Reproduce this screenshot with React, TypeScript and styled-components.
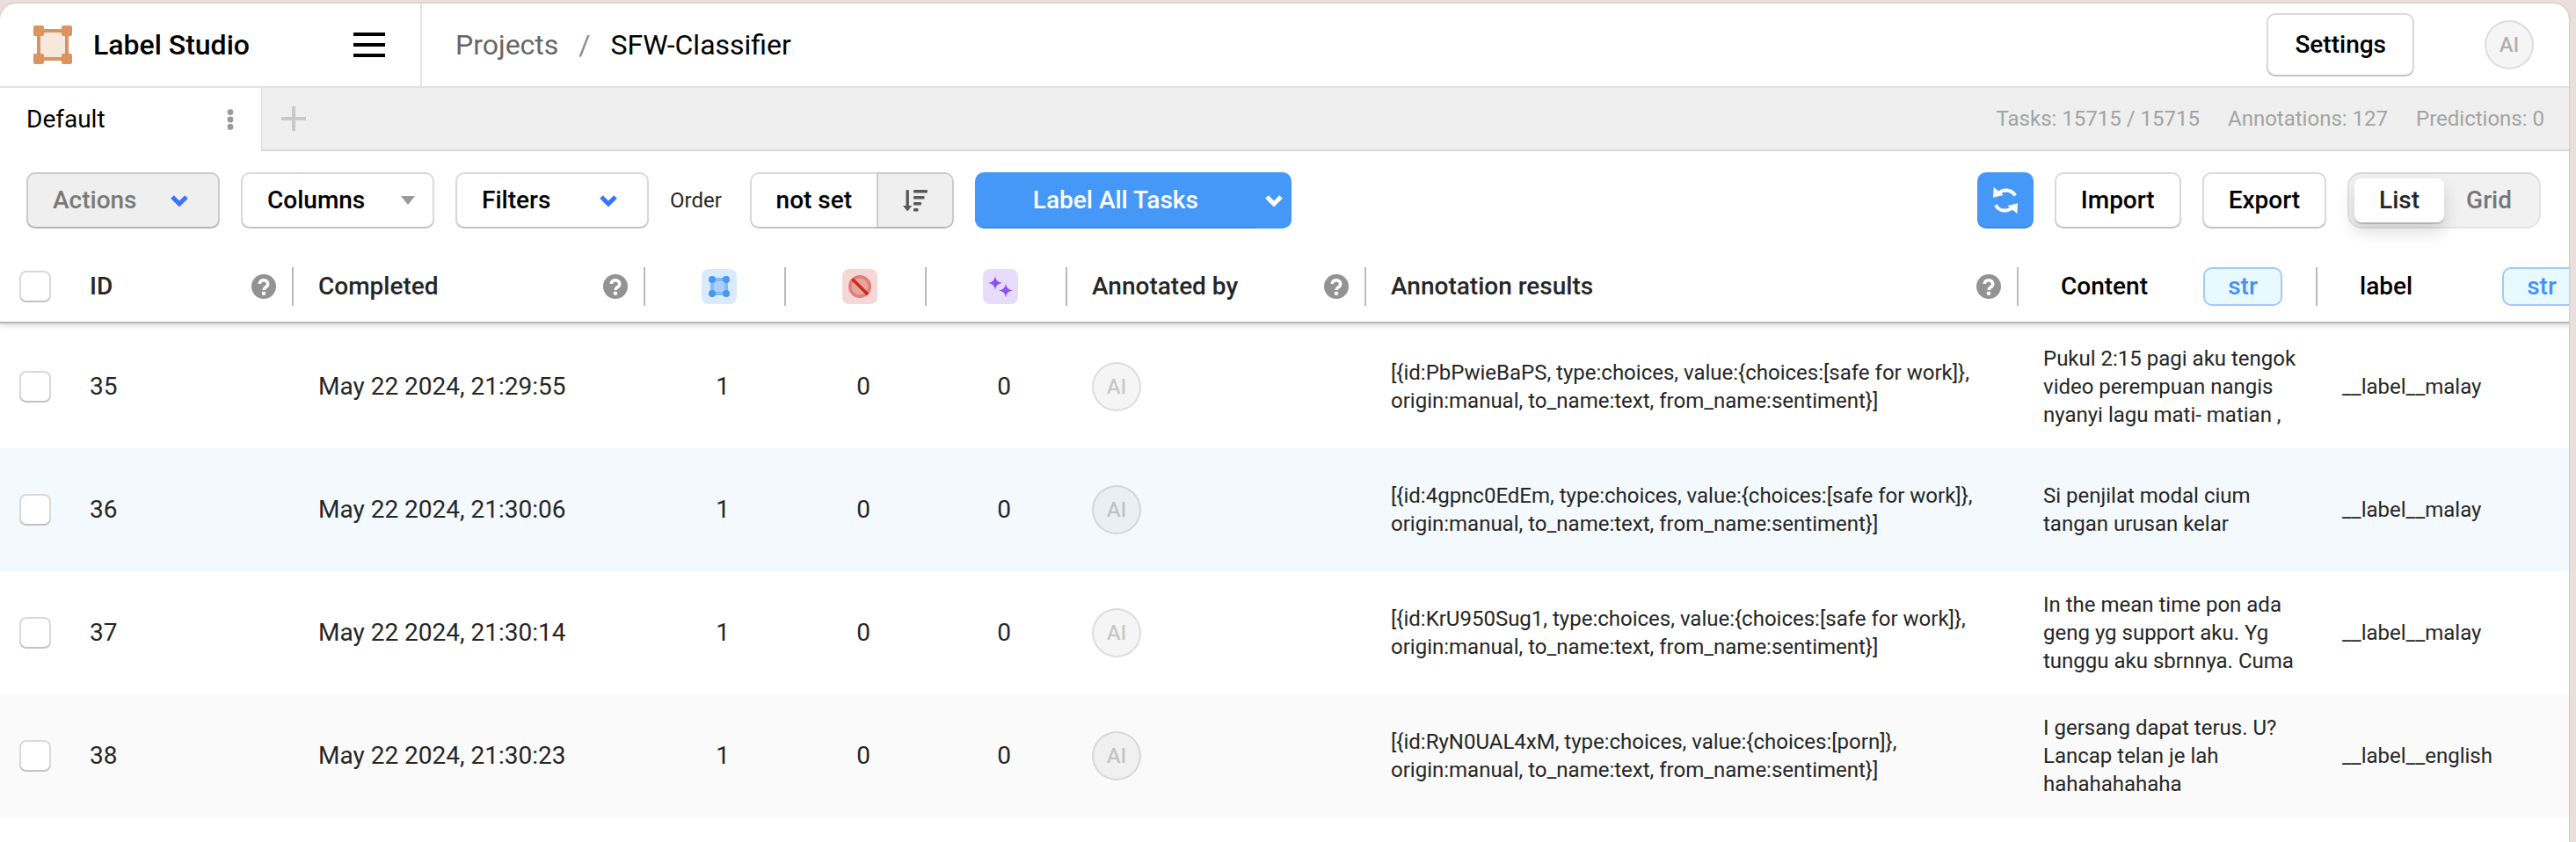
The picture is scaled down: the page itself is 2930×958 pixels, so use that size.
import React from 'react';
import styled, { createGlobalStyle, css } from 'styled-components';

const GlobalStyle = createGlobalStyle`
  *, *::before, *::after { box-sizing: border-box; }
  body {
    margin: 0;
    background: #ebdfde;
    color: #262626;
    font-family: Roboto, "Liberation Sans", sans-serif;
    font-size: 28px;
    line-height: 32px;
  }
  button { font: inherit; color: inherit; border: 0; margin: 0; padding: 0; background: none; cursor: pointer; }
  a { color: inherit; text-decoration: none; }
  svg { display: block; flex: none; }
`;

const Window = styled.div`
  margin: 4px 8px 0 0;
  min-height: calc(100vh - 4px);
  background: #fff;
  border-radius: 18px 18px 0 0;
  overflow: hidden;
  box-shadow: 0 0 2px rgba(0, 0, 0, 0.3);
`;

const Header = styled.header`
  display: flex;
  align-items: center;
  height: 96px;
  border-bottom: 2px solid #e2e2e2;
`;

const Brand = styled.div`
  display: flex;
  align-items: center;
  align-self: stretch;
  width: 480px;
  padding: 0 40px 0 38px;
  border-right: 2px solid #e2e2e2;
`;

const BrandName = styled.a`
  display: flex;
  align-items: center;
  gap: 24px;
  margin-right: auto;
  color: #000;
  font-size: 32px;
  font-weight: 500;
`;

const Breadcrumbs = styled.nav`
  display: flex;
  gap: 23px;
  margin-right: auto;
  padding-left: 38px;
  color: #000;
  font-size: 32px;
  line-height: 40px;
`;

const Crumb = styled.a<{ $muted?: boolean }>`
  color: ${(p) => (p.$muted ? '#666' : '#000')};
`;

const Slash = styled.span`
  color: #8c8c8c;
`;

const Avatar = styled.span<{ $faded?: boolean }>`
  display: flex;
  align-items: center;
  justify-content: center;
  width: 56px;
  height: 56px;
  border-radius: 50%;
  background: rgba(0, 0, 0, 0.04);
  box-shadow: inset 0 0 0 2px rgba(0, 0, 0, 0.1);
  color: ${(p) => (p.$faded ? 'rgba(0, 0, 0, 0.2)' : 'rgba(0, 0, 0, 0.3)')};
  font-size: 24px;
  font-weight: 500;
`;

const HeaderActions = styled.div`
  display: flex;
  align-items: center;
  gap: 80px;
  padding-right: 40px;
`;

const edge = css`
  box-shadow: inset 0 0 0 2px rgba(0, 0, 0, 0.15), inset 0 -2px 0 rgba(0, 0, 0, 0.1);
`;

const Button = styled.button<{ $tall?: boolean; $menu?: boolean }>`
  display: flex;
  align-items: center;
  justify-content: space-between;
  width: ${(p) => (p.$menu ? '220px' : 'auto')};
  height: ${(p) => (p.$tall ? '72px' : '64px')};
  padding: 0 ${(p) => (p.$tall ? '32px' : '30px')};
  border-radius: 10px;
  background: #fff;
  color: #000;
  font-weight: 500;
  ${edge}
  &:disabled { background: #efefef; color: #7a7a7a; cursor: default; }
`;

const IconSlot = styled.span<{ $wide?: boolean }>`
  margin-right: ${(p) => (p.$wide ? '6px' : '-8px')};
`;

const TabBar = styled.div`
  display: flex;
  height: 72px;
  background: #efefef;
`;

const Tab = styled.div`
  display: flex;
  align-items: center;
  justify-content: space-between;
  width: 298px;
  padding: 0 31px 0 30px;
  border-right: 1px solid #d8d8d8;
  background: #fff;
  color: #000;
`;

const TabRest = styled.div`
  display: flex;
  flex: 1;
  align-items: center;
  justify-content: space-between;
  padding: 0 28px 0 22px;
  border-bottom: 2px solid #d8d8d8;
`;

const Stats = styled.div`
  display: flex;
  gap: 32px;
  color: #a3a3a3;
  font-size: 24px;
`;

const Toolbar = styled.div`
  display: flex;
  align-items: center;
  gap: 24px;
  height: 112px;
  padding: 0 32px 0 30px;
`;

const ToolbarGroup = styled.div<{ $end?: boolean }>`
  display: flex;
  align-items: center;
  gap: 24px;
  margin-left: ${(p) => (p.$end ? 'auto' : '0')};
`;

const OrderGroup = styled.div`
  display: flex;
  align-items: center;
  gap: 32px;
  font-size: 24px;
`;

const Joined = styled.div`
  display: flex;
  border-radius: 10px;
  overflow: hidden;
  font-size: 28px;
`;

const OrderField = styled.button`
  width: 146px;
  height: 64px;
  border-radius: 10px 0 0 10px;
  background: #fff;
  color: #000;
  font-weight: 500;
  ${edge}
`;

const OrderDirection = styled.button`
  display: flex;
  align-items: center;
  justify-content: center;
  width: 88px;
  height: 64px;
  margin-left: -2px;
  border-radius: 0 10px 10px 0;
  background: #efefef;
  ${edge}
`;

const primary = css`
  background: #4598f7;
  color: #fff;
  font-weight: 500;
`;

const LabelButton = styled.button`
  ${primary}
  width: 320px;
  height: 64px;
  box-shadow: inset 0 -2px 0 rgba(0, 0, 0, 0.1);
`;

const LabelMenuButton = styled.button`
  ${primary}
  display: flex;
  align-items: center;
  width: 40px;
  height: 64px;
  padding-left: 10px;
`;

const RefreshButton = styled.button`
  ${primary}
  display: flex;
  align-items: center;
  justify-content: center;
  width: 64px;
  height: 64px;
  border-radius: 10px;
  box-shadow: inset 0 -2px 0 rgba(0, 0, 0, 0.1);
`;

const ViewSwitch = styled.div`
  display: flex;
  align-items: center;
  height: 64px;
  padding: 0 8px;
  border-radius: 16px;
  background: #f1f1f1;
  box-shadow: inset 0 0 0 2px rgba(0, 0, 0, 0.05), inset 0 2px 0 rgba(0, 0, 0, 0.06);
`;

const ViewOption = styled.button<{ $active?: boolean }>`
  height: 50px;
  padding: 0 ${(p) => (p.$active ? '28px' : '25px')};
  border-radius: 8px;
  color: #777;
  font-weight: 500;
  ${(p) => p.$active && css`
    background: #fff;
    color: #262626;
    box-shadow: 0 2px 0 rgba(0, 0, 0, 0.16), 0 10px 20px rgba(0, 0, 0, 0.15);
  `}
`;

const TableArea = styled.main`
  overflow: hidden;
`;

const Table = styled.table`
  width: 2976px;
  table-layout: fixed;
  border-collapse: separate;
  border-spacing: 0;
`;

const Head = styled.thead`
  position: relative;
  box-shadow: 0 2px 6px rgba(0, 0, 0, 0.16);
`;

const HeadCell = styled.th`
  height: 84px;
  padding: 2px 0 0;
  border-bottom: 2px solid #b6b6bf;
  font-weight: 500;
  text-align: left;
`;

const HeadInner = styled.div<{ $center?: boolean; $field?: boolean; $plain?: boolean }>`
  display: flex;
  align-items: center;
  justify-content: ${(p) => (p.$center ? 'center' : 'space-between')};
  height: 44px;
  padding: ${(p) => (p.$field ? '0 38px 0 48px' : '0 18px 0 28px')};
  border-right: 2px solid ${(p) => (p.$plain ? 'transparent' : '#bababa')};
  color: ${(p) => (p.$field ? '#000' : '#262626')};
`;

const TypeTag = styled.button`
  width: 90px;
  height: 44px;
  border: 2px solid #a3c8fa;
  border-radius: 10px;
  background: #e8faff;
  color: #4590f7;
  font-weight: 500;
`;

const KindBadge = styled.span<{ $tint: string }>`
  display: flex;
  align-items: center;
  justify-content: center;
  width: 40px;
  height: 40px;
  border-radius: 8px;
  background: ${(p) => p.$tint};
`;

const Body = styled.tbody`
  &::before {
    content: '';
    display: table-row;
    height: 2px;
  }
`;

const Row = styled.tr<{ $tone: string }>`
  height: 140px;
  background: ${(p) => p.$tone};
`;

const Cell = styled.td<{ $center?: boolean; $small?: boolean }>`
  padding: 0 12px 0 28px;
  text-align: ${(p) => (p.$center ? 'center' : 'left')};
  font-size: ${(p) => (p.$small ? '24px' : '28px')};
  vertical-align: middle;
`;

const CheckCell = styled.td`
  padding: 0 0 0 22px;
  vertical-align: middle;
`;

const Check = styled.input`
  display: block;
  appearance: none;
  width: 36px;
  height: 36px;
  margin: 0;
  border-radius: 8px;
  background: #fff;
  ${edge}
`;

const CheckHead = styled(HeadCell)`
  padding-left: 22px;
`;

const Chevron = ({ color = '#3874ff' }: { color?: string }) => (
  <svg width="20" height="13" viewBox="0 0 20 13" aria-hidden="true">
    <path d="M2 2l8 8 8-8" fill="none" stroke={color} strokeWidth="5" />
  </svg>
);

const Caret = () => (
  <svg width="16" height="10" viewBox="0 0 16 10" aria-hidden="true">
    <path d="M0 0h16l-8 10z" fill="#999" />
  </svg>
);

const Logo = () => (
  <svg width="44" height="44" viewBox="0 0 44 44" aria-hidden="true">
    <rect x="6" y="6" width="32" height="32" fill="#f7e8dd" stroke="#dc935d" strokeWidth="4" />
    {[0, 32].map((x) => [0, 32].map((y) => (
      <rect key={`${x}-${y}`} x={x} y={y} width="12" height="12" rx="2" fill="#dc935d" />
    )))}
  </svg>
);

const MenuIcon = () => (
  <svg width="36" height="28" viewBox="0 0 36 28" aria-hidden="true">
    <path d="M0 0h36v4H0zM0 12h36v4H0zM0 24h36v4H0z" fill="#000" />
  </svg>
);

const DotsIcon = () => (
  <svg width="8" height="24" viewBox="0 0 8 24" fill="#999" aria-hidden="true">
    <circle cx="4" cy="3.6" r="3.4" />
    <circle cx="4" cy="12" r="3.4" />
    <circle cx="4" cy="20.4" r="3.4" />
  </svg>
);

const PlusIcon = () => (
  <svg width="28" height="28" viewBox="0 0 28 28" aria-hidden="true">
    <path d="M12 0h4v12h12v4H16v12h-4V16H0v-4h12z" fill="#c9c9c9" />
  </svg>
);

const SortIcon = () => (
  <svg width="28" height="25" viewBox="0 0 28 25" fill="#595959" aria-hidden="true">
    <path d="M3.500 1q0-1 1.700-1t1.700 1v17h3.400l-5.100 6.500L0 18h3.500z" />
    <rect x="12" y="0" width="16" height="3.600" rx="1" />
    <rect x="12" y="7" width="12.500" height="3.600" rx="1" />
    <rect x="12" y="14" width="9" height="3.600" rx="1" />
    <rect x="12" y="21" width="5.500" height="3.600" rx="1" />
  </svg>
);

const RefreshIcon = () => (
  <svg width="28" height="30" viewBox="0 0 28 30" aria-hidden="true">
    <path d="M6 7.500c5-6 15-5.500 19 2.200M22 22.500c-5 6-15 5.500-19-2.200" fill="none" stroke="#fff" strokeWidth="4" />
    <path d="M0.700 0L0 11.700L11.700 9zM27.300 30L28 18.300L16.300 21z" fill="#fff" />
  </svg>
);

const HelpIcon = () => (
  <svg width="28" height="28" viewBox="0 0 28 28" aria-hidden="true">
    <circle cx="14" cy="14" r="14" fill="#939393" />
    <path d="M9.300 11a4.700 4.200 0 1 1 7.500 3.400c-1.800 1.200-2.800 1.600-2.800 3.600" fill="none" stroke="#fff" strokeWidth="3.600" />
    <circle cx="14" cy="21.800" r="2.300" fill="#fff" />
  </svg>
);

const RegionIcon = () => (
  <svg width="24" height="26" viewBox="0 0 24 26" aria-hidden="true">
    <rect x="4" y="5" width="16" height="16" fill="#abcffb" stroke="#87bafa" strokeWidth="4" />
    {[4, 20].map((x) => [5, 21].map((y) => (
      <circle key={`${x}-${y}`} cx={x} cy={y} r="4" fill="#4598f7" />
    )))}
  </svg>
);

const CancelIcon = () => (
  <svg width="26" height="26" viewBox="0 0 26 26" aria-hidden="true">
    <circle cx="13" cy="13" r="11.200" fill="#e9a49e" stroke="#df7f77" strokeWidth="3.600" />
    <path d="M4.500 4.500l17.500 17.500" stroke="#cc2a1c" strokeWidth="3.600" />
  </svg>
);

const SparkIcon = () => (
  <svg width="28" height="25" viewBox="0 0 28 25" fill="#8b51f7" aria-hidden="true">
    <path d="M8 0c1 5 2.500 7 8 8-5.500 1-7 3-8 8-1-5-2.500-7-8-8 5.500-1 7-3 8-8z" />
    <path d="M20 8.500c1 5 2.500 7 8 8-5.500 1-7 3-8 8-1-5-2.500-7-8-8 5.500-1 7-3 8-8z" />
  </svg>
);

const columnWidths = [74, 260, 400, 160, 160, 160, 340, 742, 340, 340];

const tail = 'origin:manual, to_name:text, from_name:sentiment}]';

const tasks = [
  { id: 35, done: 'May 22 2024, 21:29:55', tone: 'transparent', result: '[{id:PbPwieBaPS, type:choices, value:{choices:[safe for work]},', content: 'Pukul 2:15 pagi aku tengok video perempuan nangis nyanyi lagu mati- matian ,', label: '__label__malay' },
  { id: 36, done: 'May 22 2024, 21:30:06', tone: '#f4f9fe', result: '[{id:4gpnc0EdEm, type:choices, value:{choices:[safe for work]},', content: 'Si penjilat modal cium tangan urusan kelar', label: '__label__malay' },
  { id: 37, done: 'May 22 2024, 21:30:14', tone: 'transparent', result: '[{id:KrU950Sug1, type:choices, value:{choices:[safe for work]},', content: 'In the mean time pon ada geng yg support aku. Yg tunggu aku sbrnnya. Cuma', label: '__label__malay' },
  { id: 38, done: 'May 22 2024, 21:30:23', tone: '#fafafa', result: '[{id:RyN0UAL4xM, type:choices, value:{choices:[porn]},', content: 'I gersang dapat terus. U? Lancap telan je lah hahahahahaha', label: '__label__english' },
];

const TextHead = ({ title }: { title: string }) => (
  <HeadCell scope="col">
    <HeadInner>{title}<HelpIcon /></HeadInner>
  </HeadCell>
);

const KindHead = ({ label, tint, children }: { label: string; tint: string; children: React.ReactNode }) => (
  <HeadCell scope="col" aria-label={label}>
    <HeadInner $center><KindBadge $tint={tint}>{children}</KindBadge></HeadInner>
  </HeadCell>
);

const FieldHead = ({ title, last }: { title: string; last?: boolean }) => (
  <HeadCell scope="col">
    <HeadInner $field $plain={last}>{title}<TypeTag type="button">str</TypeTag></HeadInner>
  </HeadCell>
);

export default function App() {
  return (
    <>
      <GlobalStyle />
      <Window>
        <Header>
          <Brand>
            <BrandName href="#"><Logo />Label Studio</BrandName>
            <button type="button" aria-label="Menu"><MenuIcon /></button>
          </Brand>
          <Breadcrumbs>
            <Crumb href="#" $muted>Projects</Crumb>
            <Slash>/</Slash>
            <Crumb href="#">SFW-Classifier</Crumb>
          </Breadcrumbs>
          <HeaderActions>
            <Button type="button" $tall>Settings</Button>
            <Avatar>AI</Avatar>
          </HeaderActions>
        </Header>

        <TabBar>
          <Tab>
            Default
            <button type="button" aria-label="Tab options"><DotsIcon /></button>
          </Tab>
          <TabRest>
            <button type="button" aria-label="Add tab"><PlusIcon /></button>
            <Stats>
              <span>Tasks: 15715 / 15715</span>
              <span>Annotations: 127</span>
              <span>Predictions: 0</span>
            </Stats>
          </TabRest>
        </TabBar>

        <Toolbar>
          <ToolbarGroup>
            <Button type="button" $menu disabled>Actions<IconSlot $wide><Chevron /></IconSlot></Button>
            <Button type="button" $menu>Columns<IconSlot><Caret /></IconSlot></Button>
            <Button type="button" $menu>Filters<IconSlot $wide><Chevron /></IconSlot></Button>
            <OrderGroup>
              Order
              <Joined>
                <OrderField type="button">not set</OrderField>
                <OrderDirection type="button" aria-label="Sort direction"><SortIcon /></OrderDirection>
              </Joined>
            </OrderGroup>
            <Joined>
              <LabelButton type="button">Label All Tasks</LabelButton>
              <LabelMenuButton type="button" aria-label="Labeling options"><Chevron color="#fff" /></LabelMenuButton>
            </Joined>
          </ToolbarGroup>
          <ToolbarGroup $end>
            <RefreshButton type="button" aria-label="Refresh"><RefreshIcon /></RefreshButton>
            <Button type="button">Import</Button>
            <Button type="button">Export</Button>
            <ViewSwitch>
              <ViewOption type="button" $active>List</ViewOption>
              <ViewOption type="button">Grid</ViewOption>
            </ViewSwitch>
          </ToolbarGroup>
        </Toolbar>

        <TableArea>
          <Table>
            <colgroup>
              {columnWidths.map((width, i) => <col key={i} style={{ width }} />)}
            </colgroup>
            <Head>
              <tr>
                <CheckHead scope="col"><Check type="checkbox" aria-label="Select all tasks" /></CheckHead>
                <TextHead title="ID" />
                <TextHead title="Completed" />
                <KindHead label="Annotations" tint="#daeafd"><RegionIcon /></KindHead>
                <KindHead label="Cancelled" tint="#f5d8d6"><CancelIcon /></KindHead>
                <KindHead label="Predictions" tint="#e8dcfd"><SparkIcon /></KindHead>
                <TextHead title="Annotated by" />
                <TextHead title="Annotation results" />
                <FieldHead title="Content" />
                <FieldHead title="label" last />
              </tr>
            </Head>
            <Body>
              {tasks.map((task) => (
                <Row key={task.id} $tone={task.tone}>
                  <CheckCell><Check type="checkbox" aria-label={`Select task ${task.id}`} /></CheckCell>
                  <Cell>{task.id}</Cell>
                  <Cell>{task.done}</Cell>
                  <Cell $center>1</Cell>
                  <Cell $center>0</Cell>
                  <Cell $center>0</Cell>
                  <Cell><Avatar $faded>AI</Avatar></Cell>
                  <Cell $small>{task.result} {tail}</Cell>
                  <Cell $small>{task.content}</Cell>
                  <Cell $small>{task.label}</Cell>
                </Row>
              ))}
            </Body>
          </Table>
        </TableArea>
      </Window>
    </>
  );
}
